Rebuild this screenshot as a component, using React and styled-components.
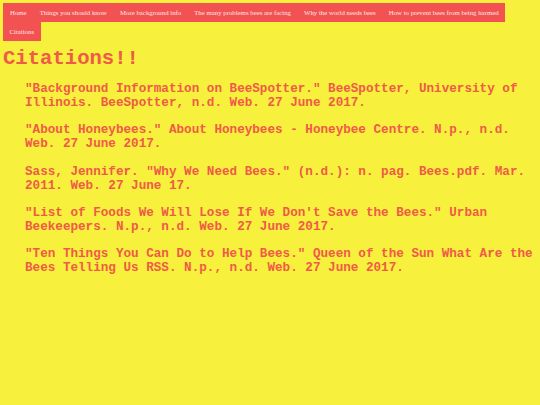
import React from "react";
import styled, { createGlobalStyle } from "styled-components";

const Global = createGlobalStyle`
  html, body { margin: 0; padding: 0; background: #f7f03c; }
  body { font-family: "Liberation Serif", "Times New Roman", serif; }
`;

const mono = `"Liberation Mono", "Courier New", monospace`;

const Page = styled.div`
  padding: 3px;
  min-height: 399px;
  background: #f7f03c;
`;

const Nav = styled.ul`
  list-style: none;
  margin: 0;
  padding: 0;
  display: flex;
  flex-wrap: wrap;
`;

const NavItem = styled.li`
  background: #f25352;
  padding: 5px 6.5px;
  font-family: "Liberation Serif", "Times New Roman", serif;
  font-size: 6.8px;
  line-height: 9px;
  color: #fde4e4;
  white-space: nowrap;
  &:first-child { padding-left: 7px; }
`;

const Heading = styled.h1`
  font-family: ${mono};
  font-weight: bold;
  font-size: 20.6px;
  color: #f05a48;
  margin: 6px 0 12px 0;
`;

const List = styled.div`
  padding-left: 22px;
`;

const Citation = styled.p`
  font-family: ${mono};
  font-weight: bold;
  font-size: 12.64px;
  line-height: 14px;
  color: #f05a48;
  margin: 0 0 13.3px 0;
`;

const links = [
  "Home",
  "Things you should know",
  "More background info",
  "The many problems bees are facing",
  "Why the world needs bees",
  "How to prevent bees from being harmed",
  "Citations",
];

const citations = [
  "\"Background Information on BeeSpotter.\" BeeSpotter, University of Illinois. BeeSpotter, n.d. Web. 27 June 2017.",
  "\"About Honeybees.\" About Honeybees - Honeybee Centre. N.p., n.d. Web. 27 June 2017.",
  "Sass, Jennifer. \"Why We Need Bees.\" (n.d.): n. pag. Bees.pdf. Mar. 2011. Web. 27 June 17.",
  "\"List of Foods We Will Lose If We Don't Save the Bees.\" Urban Beekeepers. N.p., n.d. Web. 27 June 2017.",
  "\"Ten Things You Can Do to Help Bees.\" Queen of the Sun What Are the Bees Telling Us RSS. N.p., n.d. Web. 27 June 2017.",
];

export default function App() {
  return (
    <Page>
      <Global />
      <Nav>
        {links.map((l) => (
          <NavItem key={l}>{l}</NavItem>
        ))}
      </Nav>
      <Heading>Citations!!</Heading>
      <List>
        {citations.map((c) => (
          <Citation key={c}>{c}</Citation>
        ))}
      </List>
    </Page>
  );
}
